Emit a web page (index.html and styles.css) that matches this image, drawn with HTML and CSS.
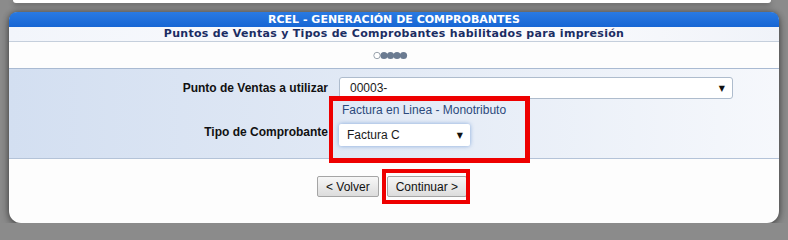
FILE: index.html
```html
<!DOCTYPE html>
<html lang="es">
<head>
    <meta charset="UTF-8">
    <title>RCEL - Generación de Comprobantes</title>
    <link rel="stylesheet" href="styles.css">
</head>
<body>
    <div class="prev-panel"></div>

    <div class="panel">
        <div class="panel-title">RCEL - GENERACIÓN DE COMPROBANTES</div>
        <div class="panel-subtitle">Puntos de Ventas y Tipos de Comprobantes habilitados para impresión</div>

        <!-- paso 1 de 5 -->
        <div class="steps">
            <svg width="38" height="9" viewBox="0 0 38 9">
                <circle cx="4" cy="4.5" r="3.2" fill="#fff" stroke="#9aa3ad" stroke-width="1"/>
                <circle cx="11" cy="4.5" r="3.6" fill="#6b7b91"/>
                <circle cx="17.5" cy="4.5" r="3.6" fill="#6b7b91"/>
                <circle cx="24" cy="4.5" r="3.6" fill="#6b7b91"/>
                <circle cx="30.5" cy="4.5" r="3.6" fill="#6b7b91"/>
            </svg>
        </div>

        <div class="form">
            <label class="form-label">Punto de Ventas a utilizar</label>
            <div class="select select-wide">
                <span>00003-</span>
                <span class="arrow">▼</span>
            </div>

            <div></div>
            <div class="note">Factura en Linea - Monotributo</div>

            <label class="form-label">Tipo de Comprobante</label>
            <div class="select select-short">
                <span>Factura C</span>
                <span class="arrow">▼</span>
            </div>
        </div>

        <div class="actions">
            <button class="btn">&lt; Volver</button>
            <button class="btn">Continuar &gt;</button>
        </div>

        <!-- marcas rojas de la captura -->
        <div class="mark mark-tipo"></div>
        <div class="mark mark-continuar"></div>
    </div>
</body>
</html>
```

FILE: styles.css
```css
body {
    margin: 0;
    padding: 0;
    background-color: #8b8b8b;
    font-family: "Liberation Sans", Arial, sans-serif;
    font-size: 12px;
}

/* borde inferior del panel anterior */
.prev-panel {
    height: 3px;
    margin: 0 17px 0 13px;
    background-color: #fff;
    border-radius: 0 0 8px 8px;
    box-shadow: 0 2px 5px rgba(0, 0, 0, 0.35);
}

.panel {
    position: relative;
    width: 770px;
    height: 211px;
    margin: 9px 0 0 9px;
    background-color: #fdfdfd;
    border-radius: 9px 9px 12px 12px;
    box-shadow: 0 0 6px rgba(0, 0, 0, 0.45), 0 4px 8px rgba(0, 0, 0, 0.25);
}

.panel-title {
    height: 15px;
    line-height: 15px;
    background: linear-gradient(#2a7ae2, #1766d4);
    border-radius: 8px 8px 0 0;
    color: #fff;
    font-family: "DejaVu Sans", Verdana, sans-serif;
    font-weight: bold;
    font-size: 11px;
    text-align: center;
}

.panel-subtitle {
    height: 14px;
    line-height: 14px;
    background: linear-gradient(to right, #f2f5fb, #fdfdfe 60%, #f0f3f9);
    border-bottom: 1px solid #c5cfdc;
    color: #1b2d63;
    font-family: "DejaVu Sans", Verdana, sans-serif;
    font-weight: bold;
    font-size: 11px;
    letter-spacing: 0.3px;
    text-align: center;
}

.steps {
    height: 26px;
    display: flex;
    align-items: center;
    justify-content: center;
    border-bottom: 1px solid #a9bad2;
}

.steps svg {
    margin-left: -4px;
}

.form {
    display: grid;
    grid-template-columns: 319px 394px;
    column-gap: 11px;
    padding: 8px 0 12px 0;
    background: linear-gradient(to right, #d3dff1, #e1e9f5 45%, #f6f8fc);
    border-bottom: 1px solid #b4c3d8;
}

.form-label {
    align-self: center;
    text-align: right;
    font-weight: bold;
    color: #111;
}

.select {
    display: flex;
    align-items: center;
    justify-content: space-between;
    box-sizing: border-box;
    height: 22px;
    padding: 0 7px 0 10px;
    background-color: #fff;
    color: #1a1a1a;
}

.select-wide {
    border: 1px solid #aebccd;
    border-radius: 3px;
}

.select-short {
    width: 131px;
    margin-top: 6px;
    padding-left: 8px;
    border-radius: 2px;
    box-shadow: 0 0 4px rgba(90, 140, 210, 0.7);
}

.arrow {
    font-family: "DejaVu Sans", sans-serif;
    font-size: 8px;
    color: #111;
}

.note {
    margin-top: 3px;
    line-height: 16px;
    padding-left: 3px;
    color: #2c4a7c;
}

.actions {
    display: flex;
    justify-content: center;
    gap: 8px;
    padding-top: 17px;
    padding-right: 4px;
}

.btn {
    height: 21px;
    padding: 0 8px;
    font-family: "Liberation Sans", Arial, sans-serif;
    font-size: 12px;
    color: #111;
    background: linear-gradient(#f7f7f7, #dcdcdc);
    border: 1px solid #a5a5a5;
    border-radius: 2px;
}

.mark {
    position: absolute;
    box-sizing: border-box;
    border: 4px solid #ee0000;
}

.mark-tipo {
    left: 320px;
    top: 84px;
    width: 201px;
    height: 67px;
    border-width: 5px 5px 5px 4px;
}

.mark-continuar {
    left: 373px;
    top: 157px;
    width: 88px;
    height: 35px;
}
```
